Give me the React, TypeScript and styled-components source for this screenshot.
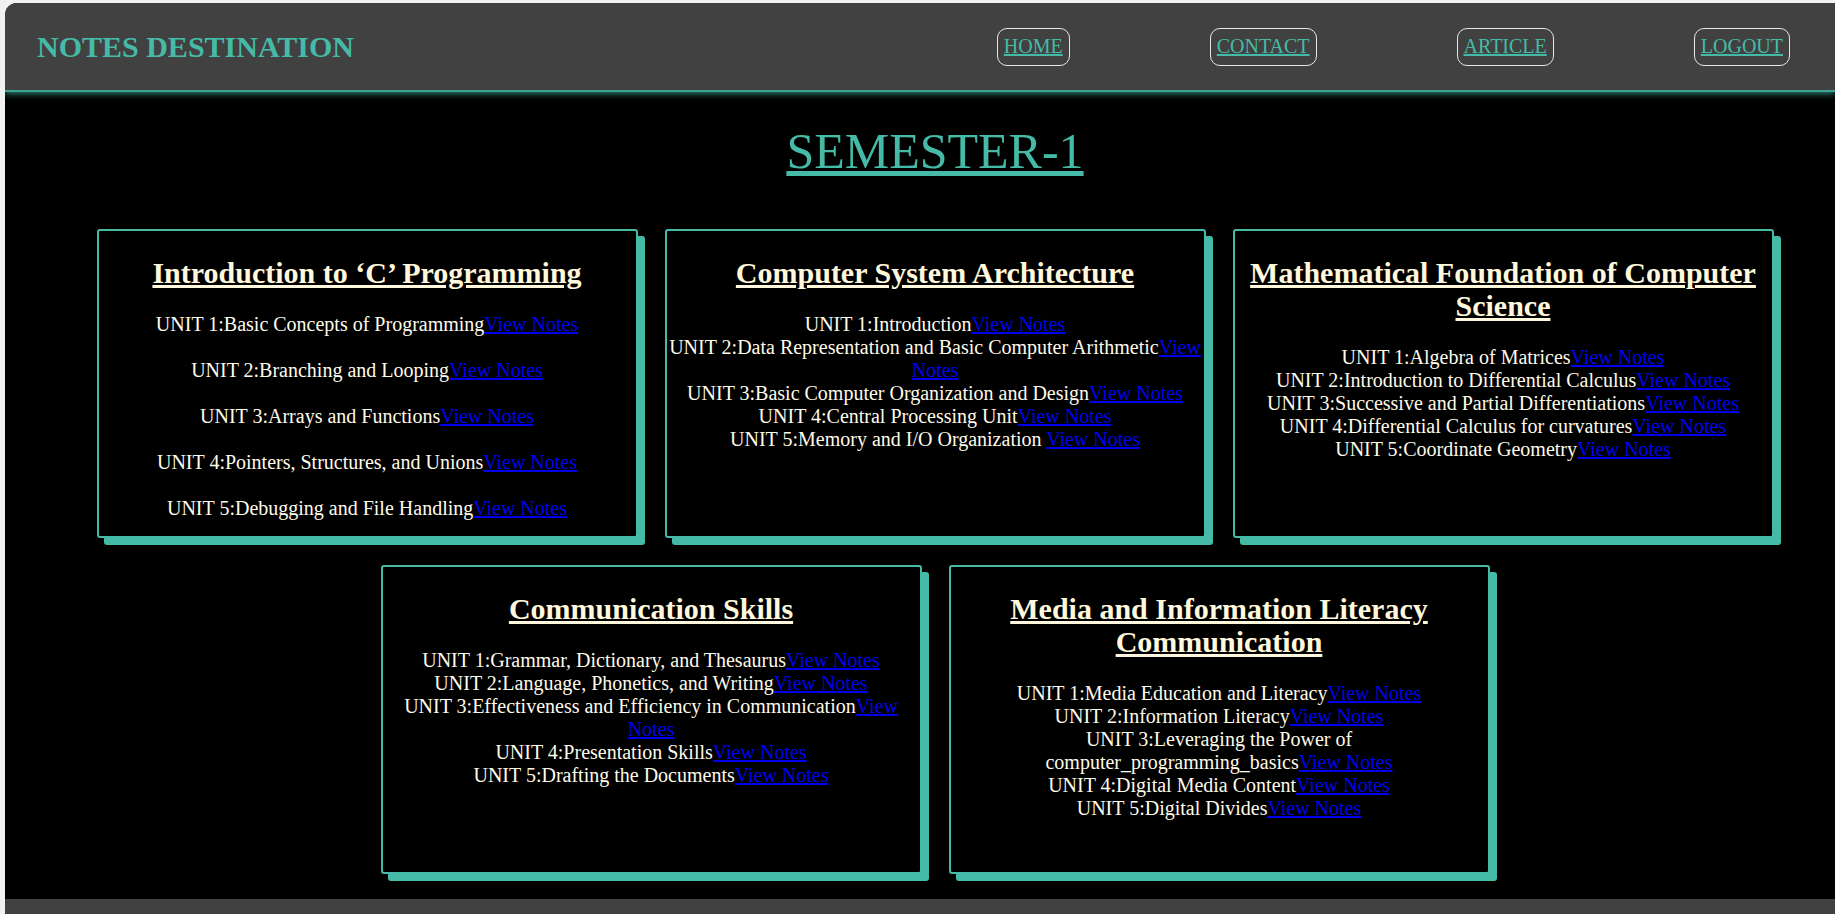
import styled, { createGlobalStyle } from 'styled-components'

interface Subject {
  title: string;
  units: string[];
  spaced?: boolean;
}

const subjects: Subject[] = [
  {
    title: 'Introduction to ‘C’ Programming',
    spaced: true,
    units: [
      'Basic Concepts of Programming',
      'Branching and Looping',
      'Arrays and Functions',
      'Pointers, Structures, and Unions',
      'Debugging and File Handling',
    ],
  },
  {
    title: 'Computer System Architecture',
    units: [
      'Introduction',
      'Data Representation and Basic Computer Arithmetic',
      'Basic Computer Organization and Design',
      'Central Processing Unit',
      'Memory and I/O Organization ',
    ],
  },
  {
    title: 'Mathematical Foundation of Computer Science',
    units: [
      'Algebra of Matrices',
      'Introduction to Differential Calculus',
      'Successive and Partial Differentiations',
      'Differential Calculus for curvatures',
      'Coordinate Geometry',
    ],
  },
  {
    title: 'Communication Skills',
    units: [
      'Grammar, Dictionary, and Thesaurus',
      'Language, Phonetics, and Writing',
      'Effectiveness and Efficiency in Communication',
      'Presentation Skills',
      'Drafting the Documents',
    ],
  },
  {
    title: 'Media and Information Literacy Communication',
    units: [
      'Media Education and Literacy',
      'Information Literacy',
      'Leveraging the Power of computer_programming_basics',
      'Digital Media Content',
      'Digital Divides',
    ],
  },
];

const navItems = ['HOME', 'CONTACT', 'ARTICLE', 'LOGOUT'];

const App = () => {
  return (
    <>
      <GlobalStyle />
      <PageWrap>
        <Header>
          <Brand>NOTES DESTINATION</Brand>
          <NavList>
            {
              navItems.map(item => (
                <li key={item}>
                  <NavLink href="#">{ item }</NavLink>
                </li>
              ))
            }
          </NavList>
        </Header>
        <Main>
          <SemesterTitle>
            <a href="#">SEMESTER-1</a>
          </SemesterTitle>
          <CardGrid>
            {
              subjects.map(subject => (
                <SubjectCard key={subject.title}>
                  <SubjectTitle>{ subject.title }</SubjectTitle>
                  <UnitList>
                    {
                      subject.units.map((unit, idx) => (
                        <UnitRow key={unit} $spaced={subject.spaced}>
                          UNIT {idx + 1}:{unit}
                          <a href="#">View Notes</a>
                        </UnitRow>
                      ))
                    }
                  </UnitList>
                </SubjectCard>
              ))
            }
          </CardGrid>
        </Main>
        <Footer />
      </PageWrap>
    </>
  )
}

const teal = '#45bba7';

const GlobalStyle = createGlobalStyle`
  html, body {
    margin: 0;
    padding: 0;
    overflow: hidden;
    background-color: #f1f1f1;
    font-family: "Liberation Serif", "Times New Roman", serif;
  }
`;

const PageWrap = styled.div`
  margin: 3px 0 0 5px;
  border-radius: 12px 0 0 0;
  overflow: hidden;
  background-color: #000;
`;

const Header = styled.header`
  position: relative;
  z-index: 1;
  display: flex;
  align-items: center;
  justify-content: space-between;
  height: 87px;
  padding: 0 45px 0 32px;
  background-color: #414141;
  border-bottom: 2px solid #3aa391;
  box-shadow: 0 2px 6px rgba(58, 163, 145, .75);
`;

const Brand = styled.div`
  font-size: 30px;
  font-weight: 700;
  color: ${teal};
`;

const NavList = styled.ul`
  display: flex;
  align-items: center;
  gap: 140px;
  margin: 0;
  padding: 0;
  list-style: none;
`;

const NavLink = styled.a`
  display: block;
  padding: 6px 6px 7px;
  border: 1px solid #e6e6e6;
  border-radius: 10px;
  font-size: 20px;
  line-height: 23px;
  color: ${teal};
  text-decoration: underline;
`;

const Main = styled.main`
  padding: 0 0 25px 30px;
  background-color: #000;
`;

const SemesterTitle = styled.h1`
  margin: 32px 0 50px;
  text-align: center;
  font-size: 50px;
  font-weight: 400;
  line-height: 55px;

  a {
    color: ${teal};
    text-decoration: underline;
  }
`;

const CardGrid = styled.div`
  display: flex;
  flex-wrap: wrap;
  justify-content: center;
  gap: 27px;
`;

const SubjectCard = styled.article`
  box-sizing: border-box;
  width: 541px;
  height: 309px;
  padding: 0 2px;
  border: 2px solid ${teal};
  border-radius: 3px;
  box-shadow: 7px 7px 0 ${teal};
  background-color: #000;
  text-align: center;
`;

const SubjectTitle = styled.h2`
  margin: 25px 0 24px;
  font-size: 30px;
  font-weight: 700;
  line-height: 33px;
  color: #fff8dc;
  text-decoration: underline;
`;

const UnitList = styled.div`
  font-size: 20px;
  line-height: 23px;
  color: #fffbea;
`;

const UnitRow = styled.div<{ $spaced?: boolean }>`
  margin-bottom: ${({ $spaced }) => ($spaced ? '23px' : '0')};

  a {
    color: #0000ee;
    text-decoration: underline;
  }
`;

const Footer = styled.footer`
  height: 15px;
  background-color: #414141;
`;

export default App
